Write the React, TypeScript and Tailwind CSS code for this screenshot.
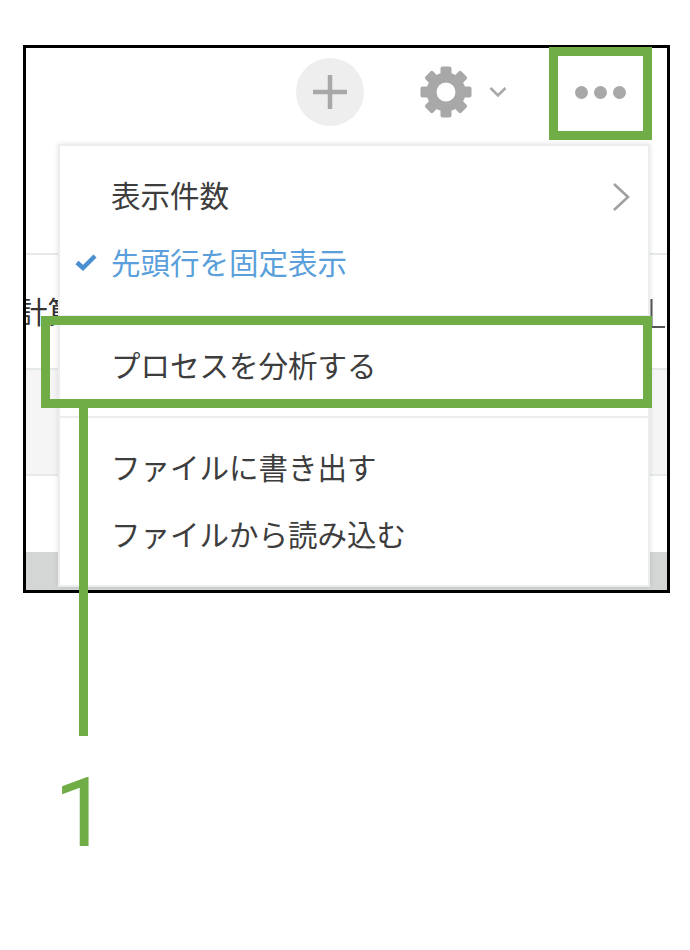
const FONT = "[font-family:'Liberation_Sans','Noto_Sans_CJK_JP',sans-serif]";

function GearIcon() {
  const teeth = [0, 45, 90, 135, 180, 225, 270, 315];
  return (
    <svg width="52" height="52" viewBox="0 0 52 52" fill="none">
      {teeth.map((deg) => (
        <rect key={deg} x="20.5" y="0.5" width="11" height="12" rx="2" fill="#a8a8a8" transform={`rotate(${deg} 26 26)`} />
      ))}
      <circle cx="26" cy="26" r="14.5" stroke="#a8a8a8" strokeWidth="10" />
    </svg>
  );
}

function MenuItem({ label, active, arrow }: { label: string; active?: boolean; arrow?: boolean }) {
  return (
    <div className="relative flex h-[67px] items-center pl-[51px] pr-[18px]">
      {active && (
        <svg className="absolute left-[14px] top-[22px]" width="24" height="20" viewBox="0 0 24 20" fill="none">
          <path d="M3 10.5 L9 16 L21 4" stroke="#4a90d0" strokeWidth="4.5" />
        </svg>
      )}
      <span className={`flex-1 text-[29.5px] leading-none ${active ? "text-[#5a9fdb]" : "text-[#3d3d3d]"}`}>{label}</span>
      {arrow && (
        <svg width="18" height="30" viewBox="0 0 18 30" fill="none">
          <path d="M2 2 L16 15 L2 28" stroke="#a0a0a0" strokeWidth="2.6" />
        </svg>
      )}
    </div>
  );
}

export default function App() {
  return (
    <div className={`relative h-[950px] w-[690px] overflow-hidden bg-white pl-[23px] pt-[45px] ${FONT}`}>
      <div className="relative flex h-[548px] w-[647px] flex-col overflow-hidden border-[3px] border-black">
        {/* toolbar */}
        <div className="h-[207px] shrink-0 border-b-2 border-[#e6e9e9]">
          <div className="flex h-[88px] items-center pl-[270px]">
            <div className="flex h-[68px] w-[68px] items-center justify-center rounded-full bg-[#eeeeee]">
              <svg width="36" height="36" viewBox="0 0 36 36" fill="none">
                <path d="M18 1 V35 M1 18 H35" stroke="#a8a8a8" strokeWidth="4.5" />
              </svg>
            </div>
            <div className="ml-[56px]">
              <GearIcon />
            </div>
            <svg className="ml-[17px]" width="18" height="12" viewBox="0 0 18 12" fill="none">
              <path d="M1.5 2 L9 9.5 L16.5 2" stroke="#a8a8a8" strokeWidth="2.6" />
            </svg>
            <div className="ml-[68px] flex gap-[6px]">
              <div className="h-[13px] w-[13px] rounded-full bg-[#a8a8a8]" />
              <div className="h-[13px] w-[13px] rounded-full bg-[#a8a8a8]" />
              <div className="h-[13px] w-[13px] rounded-full bg-[#a8a8a8]" />
            </div>
          </div>
        </div>
        {/* table rows behind the menu */}
        <div className="relative h-[115px] shrink-0 border-b-2 border-[#e6e9e9]">
          <div className="absolute left-[-8px] top-[43px] text-[29.5px] leading-none text-[#333333]">計算</div>
          <svg className="absolute left-[624px] top-[44px]" width="16" height="30" viewBox="0 0 16 30" fill="none">
            <path d="M1.5 0 V28 M1 28 H15" stroke="#555555" strokeWidth="2" />
          </svg>
        </div>
        <div className="h-[106px] shrink-0 border-b-2 border-[#e6e9e9] bg-[#f5f5f5]" />
        <div className="h-[76px] shrink-0" />
        <div className="flex-1 bg-[#d4d6d5]" />

        {/* overflow menu */}
        <div className="absolute left-[32px] top-[96px] h-[443px] w-[592px] border-2 border-[#eceeee] bg-white pt-[17px] shadow-[0_0_5px_rgba(0,0,0,0.12)]">
          <MenuItem label="表示件数" arrow />
          <MenuItem label="先頭行を固定表示" active />
          <div className="mt-[18px] h-[2px] bg-[#eceeee]" />
          <div className="mt-[16px]">
            <MenuItem label="プロセスを分析する" />
          </div>
          <div className="mt-[16px] h-[2px] bg-[#eceeee]" />
          <div className="mt-[17px]">
            <MenuItem label="ファイルに書き出す" />
            <MenuItem label="ファイルから読み込む" />
          </div>
        </div>
      </div>

      {/* green callouts */}
      <div className="absolute left-[549px] top-[47px] h-[93px] w-[103px] border-[9px] border-[#70ad47]" />
      <div className="absolute left-[41px] top-[316px] h-[92px] w-[611px] border-[9px] border-[#70ad47]" />
      <div className="absolute left-[79px] top-[408px] h-[328px] w-[9px] bg-[#70ad47]" />
      <div className="absolute left-[54px] top-[765px] [font-family:Roboto,sans-serif] text-[97px] leading-none text-[#70ad47]">1</div>
    </div>
  );
}
